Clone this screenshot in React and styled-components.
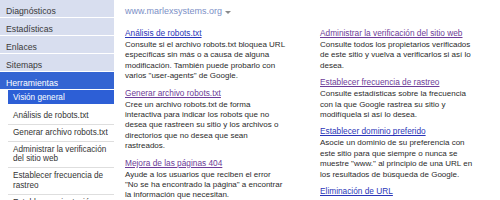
import React from "react";
import styled, { createGlobalStyle } from "styled-components";

const GlobalStyle = createGlobalStyle`
  body {
    margin: 0;
    background: #fff;
    font-family: "Liberation Sans", Arial, sans-serif;
  }
`;

const Page = styled.div`
  display: flex;
  width: 500px;
  height: 200px;
  overflow: hidden;
`;

const Sidebar = styled.nav`
  width: 114px;
  flex-shrink: 0;
  display: flex;
  flex-direction: column;
  & > * {
    flex-shrink: 0;
  }
`;

const MenuItem = styled.div`
  height: 17px;
  line-height: 22px;
  padding-left: 6px;
  font-size: 8.7px;
  color: ${(p) => (p.$active ? "#fff" : "#3a3a3a")};
  background: ${(p) => (p.$active ? "#3464d2" : "#d8deef")};
  border-bottom: 1.5px solid #fff;
  white-space: nowrap;
  overflow: hidden;
`;

const SubMenu = styled.div`
  margin-left: 8px;
  display: flex;
  flex-direction: column;
  & > * {
    flex-shrink: 0;
  }
`;

const SubItem = styled.div`
  padding: ${(p) => (p.$active ? "0 5px" : "3px 5px")};
  height: ${(p) => (p.$active ? "14px" : "auto")};
  line-height: ${(p) => (p.$active ? "15px" : "9.8px")};
  font-size: 8.2px;
  color: ${(p) => (p.$active ? "#fff" : "#333")};
  background: ${(p) => (p.$active ? "#2d5fd6" : "#fff")};
  border-bottom: ${(p) => (p.$active ? "none" : "1px solid #dedede")};
  margin-bottom: ${(p) => (p.$active ? "4px" : "0")};
  white-space: nowrap;
`;

const Main = styled.main`
  flex: 1;
  padding: 6px 0 0 11px;
`;

const SiteHeader = styled.div`
  font-size: 9px;
  line-height: 11px;
  color: #7c8fc6;
  display: flex;
  align-items: center;
  gap: 3px;
`;

const Caret = styled.span`
  width: 0;
  height: 0;
  border-left: 3px solid transparent;
  border-right: 3px solid transparent;
  border-top: 3px solid #8a8a8a;
  margin-top: 1px;
`;

const Columns = styled.div`
  display: grid;
  grid-template-columns: 195px 180px;
  margin-top: 11px;
`;

const Column = styled.div`
  display: flex;
  flex-direction: column;
`;

const Block = styled.div`
  margin-bottom: 6px;
`;

const Title = styled.a`
  display: block;
  font-size: 8.3px;
  line-height: 10.5px;
  margin-bottom: 1.5px;
  color: ${(p) => (p.$visited ? "#6d3c98" : "#2a35b8")};
  text-decoration: underline;
  white-space: nowrap;
`;

const Desc = styled.div`
  font-size: 8px;
  line-height: 10.4px;
  color: #2b2b2b;
  white-space: nowrap;
`;

const menu = ["Diagnósticos", "Estadísticas", "Enlaces", "Sitemaps"];

const subMenu = [
  ["Análisis de robots.txt"],
  ["Generar archivo robots.txt"],
  ["Administrar la verificación", "del sitio web"],
  ["Establecer frecuencia de", "rastreo"],
  ["Establecer orientación", "geográfica"],
];

const left = [
  {
    title: "Análisis de robots.txt",
    lines: [
      "Consulte si el archivo robots.txt bloquea URL",
      "específicas sin más o a causa de alguna",
      "modificación. También puede probarlo con",
      "varios \"user-agents\" de Google.",
    ],
  },
  {
    title: "Generar archivo robots.txt",
    visited: true,
    lines: [
      "Cree un archivo robots.txt de forma",
      "interactiva para indicar los robots que no",
      "desea que rastreen su sitio y los archivos o",
      "directorios que no desea que sean",
      "rastreados.",
    ],
  },
  {
    title: "Mejora de las páginas 404",
    visited: true,
    lines: [
      "Ayude a los usuarios que reciben el error",
      "\"No se ha encontrado la página\" a encontrar",
      "la información que necesitan.",
    ],
  },
];

const right = [
  {
    title: "Administrar la verificación del sitio web",
    visited: true,
    lines: [
      "Consulte todos los propietarios verificados",
      "de este sitio y vuelva a verificarlos si así lo",
      "desea.",
    ],
  },
  {
    title: "Establecer frecuencia de rastreo",
    visited: true,
    lines: [
      "Consulte estadísticas sobre la frecuencia",
      "con la que Google rastrea su sitio y",
      "modifíquela si así lo desea.",
    ],
  },
  {
    title: "Establecer dominio preferido",
    lines: [
      "Asocie un dominio de su preferencia con",
      "este sitio para que siempre o nunca se",
      "muestre \"www.\" al principio de una URL en",
      "los resultados de búsqueda de Google.",
    ],
  },
  {
    title: "Eliminación de URL",
    lines: [],
  },
];

const renderBlocks = (items) =>
  items.map((item) => (
    <Block key={item.title}>
      <Title href="#" $visited={item.visited}>
        {item.title}
      </Title>
      {item.lines.map((line) => (
        <Desc key={line}>{line}</Desc>
      ))}
    </Block>
  ));

const App = () => {
  return (
    <Page>
      <GlobalStyle />
      <Sidebar>
        {menu.map((label) => (
          <MenuItem key={label}>{label}</MenuItem>
        ))}
        <MenuItem $active>Herramientas</MenuItem>
        <SubMenu>
          <SubItem $active>Visión general</SubItem>
          {subMenu.map((lines) => (
            <SubItem key={lines[0]}>
              {lines.map((line, i) => (
                <React.Fragment key={line}>
                  {i > 0 && <br />}
                  {line}
                </React.Fragment>
              ))}
            </SubItem>
          ))}
        </SubMenu>
      </Sidebar>
      <Main>
        <SiteHeader>
          www.marlexsystems.org <Caret />
        </SiteHeader>
        <Columns>
          <Column>{renderBlocks(left)}</Column>
          <Column>{renderBlocks(right)}</Column>
        </Columns>
      </Main>
    </Page>
  );
};

export default App;
